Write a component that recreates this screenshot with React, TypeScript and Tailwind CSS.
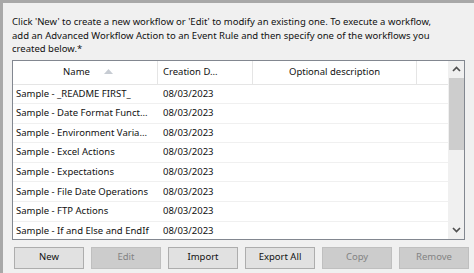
import React from 'react';

const rows = [
  'Sample - _README FIRST_',
  'Sample - Date Format Funct...',
  'Sample - Environment Varia...',
  'Sample - Excel Actions',
  'Sample - Expectations',
  'Sample - File Date Operations',
  'Sample - FTP Actions',
  'Sample - If and Else and EndIf',
];

const buttons = [
  { label: 'New', enabled: true },
  { label: 'Edit', enabled: false },
  { label: 'Import', enabled: true },
  { label: 'Export All', enabled: true },
  { label: 'Copy', enabled: false },
  { label: 'Remove', enabled: false },
];

export default function App() {
  return (
    <div
      className="w-[474px] h-[273px] overflow-hidden bg-[#f0f0f0] border-t-[3px] border-l-[3px] border-[#a8a8a8] text-[9.5px] text-[#111]"
      style={{ fontFamily: '"Noto Sans", "Open Sans", sans-serif' }}
    >
      {/* Instructions */}
      <div className="pl-[9px] pt-[12px] leading-[13.5px] whitespace-nowrap">
        <div>Click 'New' to create a new workflow or 'Edit' to modify an existing one. To execute a workflow,</div>
        <div>add an Advanced Workflow Action to an Event Rule and then specify one of the workflows you</div>
        <div>created below.*</div>
      </div>

      {/* Workflow list */}
      <div className="ml-[9px] mt-[4px] w-[453px] h-[180px] border border-[#828790] bg-white flex overflow-hidden">
        <div className="flex-1 flex flex-col min-w-0">
          <div className="flex h-[24px] border-b border-[#e5e5e5] shrink-0">
            <div className="w-[145px] shrink-0 border-r border-[#e5e5e5] flex items-center justify-center gap-[14px] pl-[6px]">
              <span>Name</span>
              <svg width="9" height="5" viewBox="0 0 9 5" className="mt-[-1px]">
                <path d="M0 5 L4.5 0 L9 5 Z" fill="#c7ccd3" />
              </svg>
            </div>
            <div className="w-[95px] shrink-0 border-r border-[#e5e5e5] flex items-center pl-[5px] whitespace-nowrap">Creation D...</div>
            <div className="w-[164px] shrink-0 border-r border-[#e5e5e5] flex items-center justify-center whitespace-nowrap">Optional description</div>
            <div className="flex-1" />
          </div>
          {rows.map((r) => (
            <div key={r} className="flex h-[19.6px] border-b border-[#f0f0f0] items-center shrink-0">
              <div className="w-[145px] shrink-0 pl-[3px] whitespace-nowrap overflow-hidden">{r}</div>
              <div className="w-[95px] shrink-0 pl-[5px]">08/03/2023</div>
            </div>
          ))}
        </div>
        {/* Scrollbar */}
        <div className="w-[16px] bg-[#f0f0f0] flex flex-col items-center shrink-0">
          <div className="h-[17px] flex items-center justify-center">
            <svg width="9" height="6" viewBox="0 0 9 6">
              <path d="M1 5 L4.5 1.5 L8 5" fill="none" stroke="#505050" strokeWidth="1.7" />
            </svg>
          </div>
          <div className="w-[15px] h-[72px] bg-[#cdcdcd]" />
          <div className="flex-1" />
          <div className="h-[17px] flex items-center justify-center">
            <svg width="9" height="6" viewBox="0 0 9 6">
              <path d="M1 1 L4.5 4.5 L8 1" fill="none" stroke="#505050" strokeWidth="1.7" />
            </svg>
          </div>
        </div>
      </div>

      {/* Buttons */}
      <div className="ml-[11px] mt-[7px] flex gap-[7px]">
        {buttons.map((b) => (
          <div
            key={b.label}
            className={
              b.enabled
                ? 'w-[70px] h-[22px] border border-[#adadad] bg-[#e1e1e1] flex items-center justify-center text-[#111]'
                : 'w-[70px] h-[22px] border border-[#bfbfbf] bg-[#cccccc] flex items-center justify-center text-[#838383]'
            }
          >
            {b.label}
          </div>
        ))}
      </div>
    </div>
  );
}
